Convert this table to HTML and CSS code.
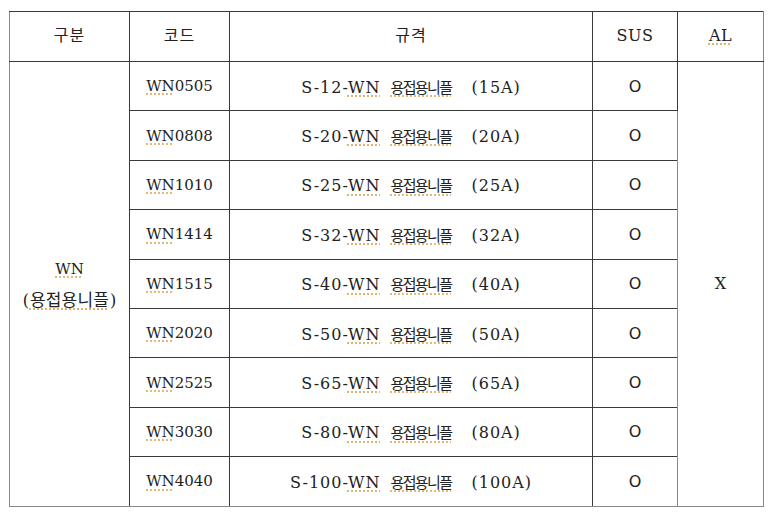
FILE: index.html
```html
<!DOCTYPE html>
<html lang="ko">
<head>
<meta charset="utf-8">
<link rel="stylesheet" href="styles.css">
</head>
<body>
<table class="spec">
  <colgroup>
    <col class="c1"><col class="c2"><col class="c3"><col class="c4"><col class="c5">
  </colgroup>
  <thead>
    <tr class="head"><th><span class="hk">구분</span></th><th><span class="hk">코드</span></th><th><span class="hk">규격</span></th><th class="sus">SUS</th><th class="sus"><span class="sq">AL</span></th></tr>
  </thead>
  <tbody>
    <tr><td rowspan="9" class="group"><span class="sq">WN</span><br><span class="par">(</span><span class="gk sq">용접용니플</span><span class="par">)</span></td><td><span class="sq">WN</span>0505</td><td><span class="lat">S-12-<span class="sq">WN</span></span><span class="ko sq">용접용니플</span><span class="lat">(15A)</span></td><td class="o">O</td><td rowspan="9" class="al">X</td></tr>
    <tr><td><span class="sq">WN</span>0808</td><td><span class="lat">S-20-<span class="sq">WN</span></span><span class="ko sq">용접용니플</span><span class="lat">(20A)</span></td><td class="o">O</td></tr>
    <tr><td><span class="sq">WN</span>1010</td><td><span class="lat">S-25-<span class="sq">WN</span></span><span class="ko sq">용접용니플</span><span class="lat">(25A)</span></td><td class="o">O</td></tr>
    <tr><td><span class="sq">WN</span>1414</td><td><span class="lat">S-32-<span class="sq">WN</span></span><span class="ko sq">용접용니플</span><span class="lat">(32A)</span></td><td class="o">O</td></tr>
    <tr><td><span class="sq">WN</span>1515</td><td><span class="lat">S-40-<span class="sq">WN</span></span><span class="ko sq">용접용니플</span><span class="lat">(40A)</span></td><td class="o">O</td></tr>
    <tr><td><span class="sq">WN</span>2020</td><td><span class="lat">S-50-<span class="sq">WN</span></span><span class="ko sq">용접용니플</span><span class="lat">(50A)</span></td><td class="o">O</td></tr>
    <tr><td><span class="sq">WN</span>2525</td><td><span class="lat">S-65-<span class="sq">WN</span></span><span class="ko sq">용접용니플</span><span class="lat">(65A)</span></td><td class="o">O</td></tr>
    <tr><td><span class="sq">WN</span>3030</td><td><span class="lat">S-80-<span class="sq">WN</span></span><span class="ko sq">용접용니플</span><span class="lat">(80A)</span></td><td class="o">O</td></tr>
    <tr><td><span class="sq">WN</span>4040</td><td><span class="lat">S-100-<span class="sq">WN</span></span><span class="ko sq">용접용니플</span><span class="lat">(100A)</span></td><td class="o">O</td></tr>
  </tbody>
</table>
</body>
</html>
```
FILE: styles.css
```css
html, body {
  margin: 0;
  padding: 0;
  background: #ffffff;
}
body {
  padding: 11px 0 0 9px;
}
.spec {
  border-collapse: collapse;
  table-layout: fixed;
  width: 754px;
  font-family: "DejaVu Serif", "Noto Sans CJK KR", serif;
  font-size: 15px;
  color: #222;
}
.spec .c1 { width: 120px; }
.spec .c2 { width: 100px; }
.spec .c3 { width: 363px; }
.spec .c4 { width: 85px; }
.spec .c5 { width: 86px; }
.spec th, .spec td {
  border: 1px solid #3a3a3a;
  text-align: center;
  vertical-align: middle;
  padding: 0;
  height: 48.4px;
  white-space: nowrap;
  font-weight: normal;
}
.spec .head th {
  height: 47px;
  padding-bottom: 2px;
}
.spec th:first-child, .spec td.group {
  border-left-color: #888;
}
.spec th:last-child, .spec td.al {
  border-right-color: #888;
}
.spec tbody tr:last-child td, .spec td.group, .spec td.al {
  border-bottom-color: #888;
}
.spec td.al {
  border-left-color: #888;
}
.hk {
  font-family: "Noto Sans CJK KR", sans-serif;
  font-size: 16px;
  letter-spacing: 1px;
  vertical-align: 4px;
}
.sus {
  font-size: 16px;
  letter-spacing: 0.5px;
}
.spec td.group {
  line-height: 30px;
  padding-top: 2px;
}
.gk {
  font-family: "Noto Sans CJK KR", sans-serif;
  font-size: 17px;
  letter-spacing: 0.2px;
}
.par {
  font-size: 16px;
  margin: 0 1px;
}
.lat {
  font-size: 16px;
  letter-spacing: 1px;
}
.ko {
  font-family: "Noto Sans CJK KR", sans-serif;
  font-size: 15px;
  letter-spacing: -1.6px;
  margin-left: 10px;
  margin-right: 20px;
}
.o {
  font-family: "DejaVu Sans", sans-serif;
  font-size: 16px;
}
.al {
  font-size: 16px;
}
.sq {
  text-decoration: underline dotted #d9a24a;
  text-underline-offset: 3px;
}
```
